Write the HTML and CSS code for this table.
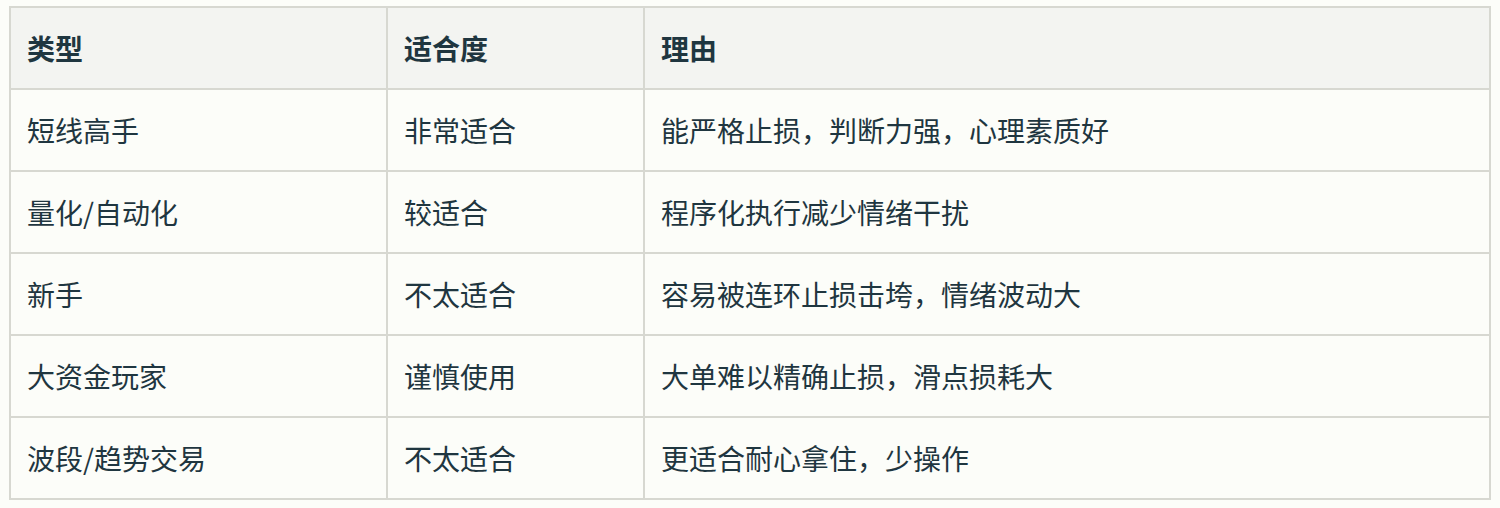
FILE: index.html
```html
<!DOCTYPE html>
<html lang="zh">
<head>
<meta charset="utf-8">
<link rel="stylesheet" href="styles.css">
</head>
<body>
<div class="wrap">
<table class="grid">
  <colgroup>
    <col class="c1"><col class="c2"><col class="c3">
  </colgroup>
  <thead>
    <tr><th>类型</th><th>适合度</th><th>理由</th></tr>
  </thead>
  <tbody>
    <tr><td>短线高手</td><td>非常适合</td><td>能严格止损，判断力强，心理素质好</td></tr>
    <tr><td>量化/自动化</td><td>较适合</td><td>程序化执行减少情绪干扰</td></tr>
    <tr><td>新手</td><td>不太适合</td><td>容易被连环止损击垮，情绪波动大</td></tr>
    <tr><td>大资金玩家</td><td>谨慎使用</td><td>大单难以精确止损，滑点损耗大</td></tr>
    <tr><td>波段/趋势交易</td><td>不太适合</td><td>更适合耐心拿住，少操作</td></tr>
  </tbody>
</table>
</div>
</body>
</html>
```
FILE: styles.css
```css
html, body {
  margin: 0;
  padding: 0;
  background: #fcfdf9;
}
.wrap {
  padding: 6px 11px 0 9px;
}
.grid {
  width: 1480px;
  border-collapse: collapse;
  table-layout: fixed;
  font-family: "Noto Sans CJK SC", "Noto Sans", sans-serif;
  font-size: 28px;
  color: #1f3640;
  background: #fcfdf9;
}
.c1 { width: 377px; }
.c2 { width: 257px; }
.c3 { width: 846px; }
.grid th, .grid td {
  border: 2px solid #d7d8d1;
  padding: 19px 16px;
  line-height: 42px;
  height: 42px;
  text-align: left;
  white-space: nowrap;
}
.grid th {
  background: #f3f4f1;
  font-weight: 700;
}
.grid td {
  font-weight: 400;
}
```
